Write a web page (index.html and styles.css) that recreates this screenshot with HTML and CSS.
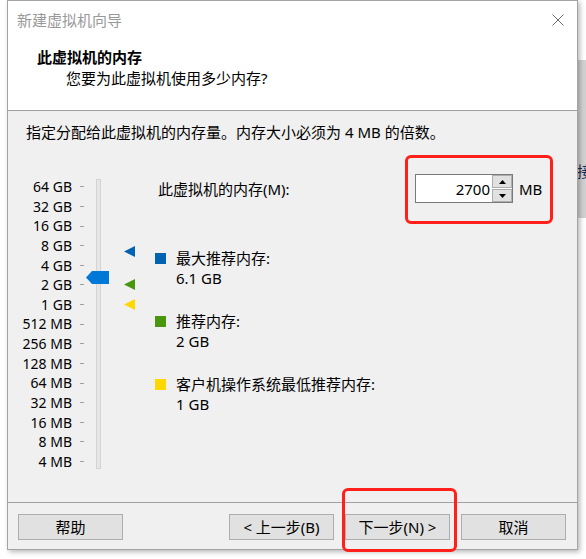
FILE: index.html
```html
<!DOCTYPE html>
<html lang="zh-CN">
<head>
    <meta charset="UTF-8">
    <meta name="viewport" content="width=device-width, initial-scale=1.0">
    <title>新建虚拟机向导</title>
    <link rel="stylesheet" href="styles.css">
</head>
<body>

    <!-- Fenêtre en arrière-plan, à droite -->
    <div class="back-window"><span>接</span></div>

    <div class="dialog">
        <div class="titlebar">
            <span class="title">新建虚拟机向导</span>
            <svg class="close" width="12" height="12" viewBox="0 0 12 12">
                <path d="M0.5 0.5 L11.5 11.5 M11.5 0.5 L0.5 11.5" stroke="#6b6b6b" stroke-width="1" fill="none"/>
            </svg>
        </div>

        <div class="header">
            <div class="heading">此虚拟机的内存</div>
            <div class="subheading">您要为此虚拟机使用多少内存?</div>
        </div>

        <div class="content">
            <div class="intro">指定分配给此虚拟机的内存量。内存大小必须为 4 MB 的倍数。</div>

            <div class="main">
                <div class="scale">
                    <div class="scale-labels">
                        <div class="scale-label">64 GB</div>
                        <div class="scale-label">32 GB</div>
                        <div class="scale-label">16 GB</div>
                        <div class="scale-label">8 GB</div>
                        <div class="scale-label">4 GB</div>
                        <div class="scale-label">2 GB</div>
                        <div class="scale-label">1 GB</div>
                        <div class="scale-label">512 MB</div>
                        <div class="scale-label">256 MB</div>
                        <div class="scale-label">128 MB</div>
                        <div class="scale-label">64 MB</div>
                        <div class="scale-label">32 MB</div>
                        <div class="scale-label">16 MB</div>
                        <div class="scale-label">8 MB</div>
                        <div class="scale-label">4 MB</div>
                    </div>
                    <div class="track"></div>

                    <!-- Curseur et repères -->
                    <svg class="thumb" width="23" height="13" viewBox="0 0 23 13">
                        <polygon points="0,6.5 6,0 23,0 23,13 6,13" fill="#0078d7"/>
                    </svg>
                    <svg class="marker marker-max" width="11" height="11" viewBox="0 0 11 11">
                        <polygon points="0,5.5 11,0 11,11" fill="#0063b1"/>
                    </svg>
                    <svg class="marker marker-rec" width="11" height="11" viewBox="0 0 11 11">
                        <polygon points="0,5.5 11,0 11,11" fill="#4a970f"/>
                    </svg>
                    <svg class="marker marker-min" width="11" height="11" viewBox="0 0 11 11">
                        <polygon points="0,5.5 11,0 11,11" fill="#ffd800"/>
                    </svg>
                </div>

                <div class="details">
                    <div class="mem-row">
                        <span class="mem-label">此虚拟机的内存(M):</span>
                        <div class="spinner">
                            <span class="spinner-value">2700</span>
                            <div class="spinner-buttons">
                                <div class="spin-btn">
                                    <svg width="7" height="4" viewBox="0 0 7 4"><polygon points="0,4 3.5,0 7,4" fill="#000"/></svg>
                                </div>
                                <div class="spin-btn">
                                    <svg width="7" height="4" viewBox="0 0 7 4"><polygon points="0,0 7,0 3.5,4" fill="#000"/></svg>
                                </div>
                            </div>
                        </div>
                        <span class="unit">MB</span>
                    </div>

                    <div class="legend">
                        <div class="legend-item">
                            <span class="swatch swatch-max"></span>
                            <div class="legend-text">
                                <div>最大推荐内存:</div>
                                <div>6.1 GB</div>
                            </div>
                        </div>
                        <div class="legend-item">
                            <span class="swatch swatch-rec"></span>
                            <div class="legend-text">
                                <div>推荐内存:</div>
                                <div>2 GB</div>
                            </div>
                        </div>
                        <div class="legend-item">
                            <span class="swatch swatch-min"></span>
                            <div class="legend-text">
                                <div>客户机操作系统最低推荐内存:</div>
                                <div>1 GB</div>
                            </div>
                        </div>
                    </div>
                </div>
            </div>
        </div>

        <div class="footer">
            <button class="btn">帮助</button>
            <div class="nav-buttons">
                <button class="btn">&lt; 上一步(B)</button>
                <button class="btn">下一步(N) &gt;</button>
                <button class="btn">取消</button>
            </div>
        </div>
    </div>

    <!-- Encadrés rouges d'annotation -->
    <div class="annot annot-memory"></div>
    <div class="annot annot-next"></div>

</body>
</html>
```

FILE: styles.css
```css
/* Style global */
body {
    font-family: "Noto Sans", "Noto Sans CJK SC", sans-serif;
    font-size: 15px;
    color: #000;
    margin: 0;
    padding: 0;
    width: 586px;
    height: 559px;
    background: #fff;
    position: relative;
    overflow: hidden;
}

.back-window {
    position: absolute;
    left: 560px;
    top: 60px;
    width: 40px;
    height: 158px;
    background: #d2d2d2;
}

.back-window span {
    position: absolute;
    left: 17px;
    top: 100px;
    font-size: 15px;
    color: #1a2a50;
}

.dialog {
    position: relative;
    margin-left: 7px;
    width: 569px;
    height: 548px;
    border: 1px solid #a3a3a3;
    background: #f0f0f0;
    box-shadow: 2px 2px 5px rgba(0, 0, 0, 0.28);
    display: flex;
    flex-direction: column;
}

.titlebar {
    height: 39px;
    background: #fff;
    display: flex;
    align-items: center;
    justify-content: space-between;
    padding: 0 13px 0 9px;
}

.title {
    color: #999;
    font-size: 15px;
    line-height: 20px;
    margin-top: -1px;
}

.close {
    display: block;
    margin-top: -1px;
}

.header {
    height: 70px;
    background: #fff;
    border-bottom: 1px solid #a0a0a0;
    padding-left: 29px;
}

.heading {
    font-weight: 700;
    font-size: 15px;
    line-height: 20px;
    margin-top: 7px;
}

.subheading {
    line-height: 20px;
    margin-top: 1px;
    padding-left: 29px;
}

.content {
    flex: 1;
    padding: 11px 0 0 18px;
    border-bottom: 1px solid #a0a0a0;
}

.intro {
    line-height: 20px;
}

.main {
    display: flex;
    margin-top: 35px;
    margin-left: -18px;
}

.scale {
    position: relative;
    display: flex;
    width: 147px;
}

.scale-labels {
    width: 76px;
    font-size: 14px;
}

.scale-label {
    height: 19.64px;
    line-height: 19.64px;
    display: flex;
    justify-content: flex-end;
    align-items: center;
}

.scale-label::after {
    content: "";
    width: 4px;
    height: 1px;
    background: #a0a0a0;
    margin-left: 8px;
}

.track {
    width: 3px;
    height: 288px;
    margin: 2px 0 0 12px;
    background: #e6e6e6;
    border: 1px solid #d4d4d4;
}

.thumb {
    position: absolute;
    left: 78px;
    top: 94px;
}

.marker {
    position: absolute;
    left: 116px;
}

.marker-max { top: 69px; }
.marker-rec { top: 102px; }
.marker-min { top: 122px; }

.details {
    display: flex;
    flex-direction: column;
}

.mem-row {
    display: flex;
    align-items: center;
    height: 29px;
    margin-top: -3px;
    padding-left: 3px;
}

.mem-label {
    width: 257px;
    line-height: 20px;
}

.spinner {
    width: 96px;
    height: 27px;
    border: 1px solid #7a7a7a;
    background: #fff;
    display: flex;
    align-items: center;
}

.spinner-value {
    flex: 1;
    text-align: right;
    padding-right: 2px;
    line-height: 20px;
}

.spinner-buttons {
    display: flex;
    flex-direction: column;
    gap: 1px;
    width: 20px;
    height: 27px;
}

.spin-btn {
    flex: 1;
    background: #e1e1e1;
    border: 1px solid #adadad;
    display: flex;
    align-items: center;
    justify-content: center;
}

.spin-btn svg {
    display: block;
}

.unit {
    margin-left: 6px;
    line-height: 20px;
}

.legend {
    display: flex;
    flex-direction: column;
    gap: 23px;
    margin-top: 45px;
}

.legend-item {
    display: flex;
    align-items: flex-start;
}

.swatch {
    width: 11px;
    height: 11px;
    margin-top: 5px;
    margin-right: 10px;
}

.swatch-max { background: #0063b1; }
.swatch-rec { background: #4a970f; }
.swatch-min { background: #ffd800; }

.legend-text {
    line-height: 20px;
}

.footer {
    height: 46px;
    display: flex;
    justify-content: space-between;
    align-items: flex-start;
    padding: 11px 11px 0 10px;
    box-sizing: border-box;
}

.nav-buttons {
    display: flex;
    gap: 11px;
}

.btn {
    width: 105px;
    height: 26px;
    background: #e1e1e1;
    border: 1px solid #adadad;
    font-family: "Noto Sans", "Noto Sans CJK SC", sans-serif;
    font-size: 15px;
    color: #000;
    padding: 0;
    line-height: 22px;
}

/* Encadrés rouges (annotations) */
.annot {
    position: absolute;
    border: 3px solid #ff2119;
    border-radius: 6px;
}

.annot-memory {
    left: 405px;
    top: 155px;
    width: 142px;
    height: 63px;
}

.annot-next {
    left: 342px;
    top: 488px;
    width: 109px;
    height: 58px;
}
```
